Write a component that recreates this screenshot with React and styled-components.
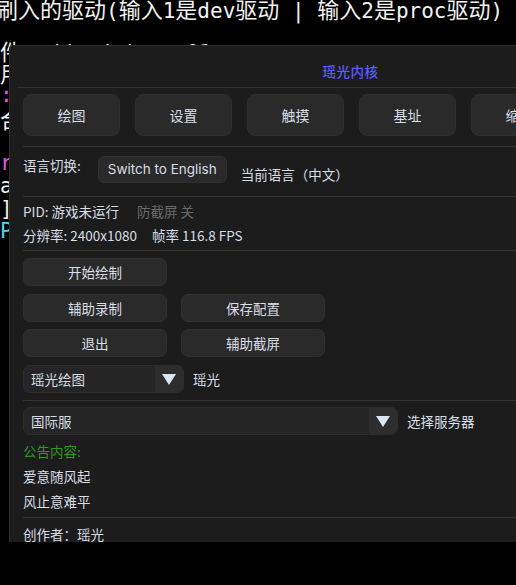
import styled, { createGlobalStyle } from "styled-components";

const Global = createGlobalStyle`
  html, body {
    margin: 0;
    padding: 0;
    background: #000;
  }
  body {
    width: 516px;
    height: 585px;
    overflow: hidden;
  }
`;

const Screen = styled.div`
  position: relative;
  width: 516px;
  height: 585px;
  background: #000;
  overflow: hidden;
`;

const Terminal = styled.div`
  font-family: "DejaVu Sans Mono", "Noto Sans CJK SC", monospace;
  font-size: 21px;
  color: #f2f2f2;
  white-space: pre;
`;

const TermLine = styled.div`
  height: ${(p) => p.$h || "22.7px"};
  line-height: 22.7px;
  margin-left: ${(p) => p.$shift || "0"};
  margin-top: ${(p) => p.$mt || "0"};
  color: ${(p) => p.$c || "#f2f2f2"};
`;

/* wide characters of the terminal */
const Wide = styled.span`
  font-family: "Noto Sans CJK SC", sans-serif;
  font-size: 22px;
`;

const Window = styled.div`
  position: absolute;
  left: 9px;
  top: 45px;
  width: 682px;
  height: 497px;
  background: #1c1c1c;
  border: 1px solid #2e2e2e;
  border-bottom: none;
  border-radius: 4px 4px 0 0;
  padding: 0 12px 0 13px;
  box-sizing: border-box;
  font-family: "Noto Sans CJK SC", "Noto Sans", sans-serif;
  font-size: 13.5px;
  color: #d9dee7;
  overflow: hidden;
`;

const TitleBar = styled.div`
  height: 42px;
  padding-top: 9px;
  box-sizing: border-box;
  display: flex;
  align-items: center;
  justify-content: center;
  color: #5a5cff;
  font-size: 13.5px;
  font-weight: 500;
  letter-spacing: 0.5px;
  border-bottom: 1px solid #333;
  margin: 0 -6px;
`;

const Tabs = styled.div`
  display: flex;
  gap: 15px;
  margin-top: 6px;
`;

const Tab = styled.button`
  flex: 0 0 97px;
  height: 42px;
  background: #2a2a2a;
  border: 1px solid #303030;
  border-radius: 8px;
  color: #d9dee7;
  font-family: inherit;
  font-size: 14px;
  padding: 0;
`;

const Sep = styled.div`
  height: 1px;
  background: #343434;
  margin: ${(p) => p.$m || "9px 0 7px"};
`;

const Row = styled.div`
  display: flex;
  align-items: center;
`;

const Label = styled.span`
  color: ${(p) => p.$c || "#d9dee7"};
  margin-top: ${(p) => p.$mt || "0"};
`;

const SmallBtn = styled.button`
  height: 27px;
  padding: 0 9px;
  background: #2a2a2a;
  border: 1px solid #303030;
  border-radius: 6px;
  color: #d9dee7;
  font-family: "Inter", "Noto Sans", sans-serif;
  font-size: 13.5px;
  margin: 0 14px 0 17px;
`;

const Info = styled.div`
  display: flex;
  flex-direction: column;
  padding-top: 2px;
`;

const InfoLine = styled.div`
  height: 24px;
  line-height: 24px;
  display: flex;
  gap: ${(p) => p.$gap || "15px"};
`;

const Grid = styled.div`
  display: grid;
  grid-template-columns: 144px 144px;
  column-gap: 14px;
  row-gap: 7.5px;
  margin-top: 7px;
`;

const ActBtn = styled.button`
  height: 28px;
  background: #2a2a2a;
  border: 1px solid #303030;
  border-radius: 7px;
  color: #d9dee7;
  font-family: inherit;
  font-size: 13.5px;
  padding: 0;
`;

const ComboRow = styled.div`
  display: flex;
  align-items: center;
  gap: 9px;
  margin-top: ${(p) => p.$mt || "8px"};
`;

const Combo = styled.div`
  width: ${(p) => p.$w}px;
  height: 28px;
  display: flex;
  background: #252525;
  border: 1px solid #2e2e2e;
  border-radius: 7px;
  overflow: hidden;
  box-sizing: border-box;
`;

const ComboText = styled.div`
  flex: 1;
  display: flex;
  align-items: center;
  padding-left: 7px;
  color: #d9dee7;
`;

const ComboArrow = styled.div`
  width: 28px;
  background: #2d2d2d;
  display: flex;
  align-items: center;
  justify-content: center;
`;

const Notice = styled.div`
  display: flex;
  flex-direction: column;
  margin-top: 4px;
`;

const NoticeLine = styled.div`
  height: 25px;
  line-height: 25px;
  margin-top: ${(p) => p.$mt || "0"};
  color: ${(p) => p.$c || "#d9dee7"};
`;

function Arrow() {
  return (
    <svg width="14" height="12" viewBox="0 0 14 12">
      <polygon points="0,1 14,1 7,12" fill="#dbe6f5" />
    </svg>
  );
}

export default function App() {
  return (
    <>
      <Global />
      <Screen>
        <Terminal>
          <TermLine $shift="-4px" $mt="-3px" $h="41.7px">
            <Wide>刷入的驱动</Wide>(<Wide>输入</Wide>1<Wide>是</Wide>dev
            <Wide>驱动</Wide> | <Wide>输入</Wide>2<Wide>是</Wide>proc
            <Wide>驱动</Wide>)
          </TermLine>
          <TermLine>
            <Wide>件</Wide>: /dev/uinput01
          </TermLine>
          <TermLine>
            <Wide>用</Wide>
          </TermLine>
          <TermLine $c="#e05ce0">:</TermLine>
          <TermLine>
            <Wide>合</Wide>
          </TermLine>
          <TermLine> </TermLine>
          <TermLine $c="#e05ce0">r</TermLine>
          <TermLine>a</TermLine>
          <TermLine>]</TermLine>
          <TermLine $c="#4fd6e8">P</TermLine>
        </Terminal>

        <Window>
          <TitleBar>瑶光内核</TitleBar>
          <Tabs>
            <Tab>绘图</Tab>
            <Tab>设置</Tab>
            <Tab>触摸</Tab>
            <Tab>基址</Tab>
            <Tab>缩放</Tab>
          </Tabs>

          <Sep $m="10px 0 7px" />
          <Row>
            <Label $mt="-8px">语言切换:</Label>
            <SmallBtn>Switch to English</SmallBtn>
            <Label $mt="10px">当前语言（中文）</Label>
          </Row>

          <Sep $m="12px 0 0" />
          <Info>
            <InfoLine $gap="18px">
              <span>PID: 游戏未运行</span>
              <Label $c="#6b6b6b">防截屏 关</Label>
            </InfoLine>
            <InfoLine>
              <span>分辨率: 2400x1080</span>
              <span>帧率 116.8 FPS</span>
            </InfoLine>
          </Info>

          <Sep $m="3px 0 0" />
          <Grid>
            <ActBtn>开始绘制</ActBtn>
            <span />
            <ActBtn>辅助录制</ActBtn>
            <ActBtn>保存配置</ActBtn>
            <ActBtn>退出</ActBtn>
            <ActBtn>辅助截屏</ActBtn>
          </Grid>
          <ComboRow $mt="7.5px">
            <Combo $w={161}>
              <ComboText>瑶光绘图</ComboText>
              <ComboArrow>
                <Arrow />
              </ComboArrow>
            </Combo>
            <span>瑶光</span>
          </ComboRow>

          <Sep $m="7.5px 0 0" />
          <ComboRow $mt="6px">
            <Combo $w={375}>
              <ComboText>国际服</ComboText>
              <ComboArrow>
                <Arrow />
              </ComboArrow>
            </Combo>
            <span>选择服务器</span>
          </ComboRow>
          <Notice>
            <NoticeLine $c="#2e9a1e">公告内容:</NoticeLine>
            <NoticeLine>爱意随风起</NoticeLine>
            <NoticeLine>风止意难平</NoticeLine>
          </Notice>
          <Sep $m="3px 0 0" />
          <NoticeLine $mt="4px">创作者：瑶光</NoticeLine>
        </Window>
      </Screen>
    </>
  );
}
